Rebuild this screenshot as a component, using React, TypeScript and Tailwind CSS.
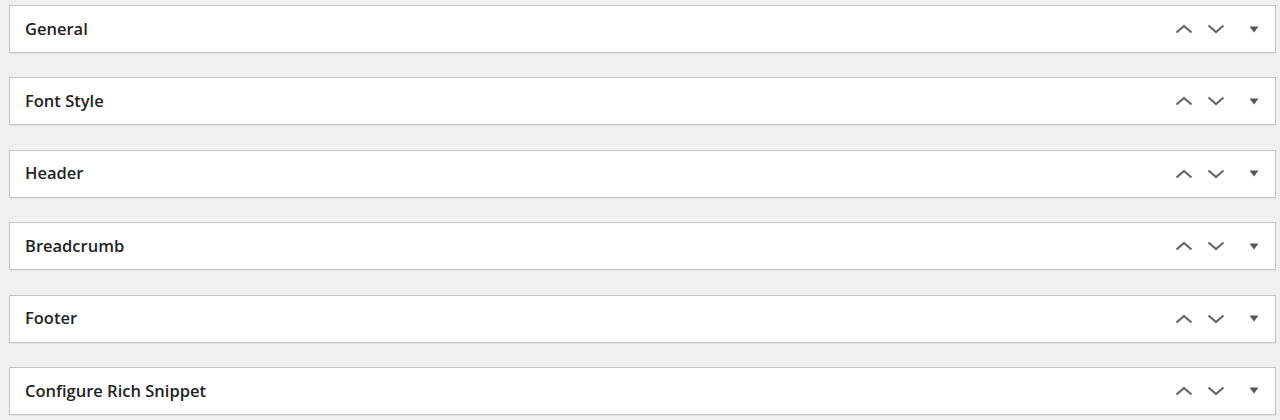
import React from "react";

const boxes = ["General", "Font Style", "Header", "Breadcrumb", "Footer", "Configure Rich Snippet"];

function ChevronUp() {
  return (
    <svg width="18" height="10" viewBox="0 0 18 10" fill="none">
      <path d="M1.5 8.5 L9 2 L16.5 8.5" stroke="#646970" strokeWidth="2.3" />
    </svg>
  );
}

function ChevronDown() {
  return (
    <svg width="18" height="10" viewBox="0 0 18 10" fill="none">
      <path d="M1.5 1.5 L9 8 L16.5 1.5" stroke="#646970" strokeWidth="2.3" />
    </svg>
  );
}

function Caret() {
  return (
    <svg width="10" height="7" viewBox="0 0 10 7">
      <path d="M0.5 0.5 L9.5 0.5 L5 6.5 Z" fill="#50575e" />
    </svg>
  );
}

export default function App() {
  return (
    <div className="min-h-[420px] bg-[#f0f0f1] pl-[9px] pr-[4px] pt-[5px] font-['Open_Sans',sans-serif]">
      <div className="flex flex-col gap-[24.4px]">
        {boxes.map((b) => (
          <div
            key={b}
            className="h-[48px] bg-white border border-[#c3c4c7] shadow-[0_1px_1px_rgba(0,0,0,0.04)] flex items-center justify-between"
          >
            <h2 className="pl-[15px] text-[16.5px] font-semibold text-[#1d2327]">{b}</h2>
            <div className="flex items-center h-full">
              <button type="button" className="w-[32px] h-full flex items-center justify-center">
                <ChevronUp />
              </button>
              <button type="button" className="w-[32px] h-full flex items-center justify-center">
                <ChevronDown />
              </button>
              <button type="button" className="w-[43px] h-full flex items-center justify-center">
                <Caret />
              </button>
            </div>
          </div>
        ))}
      </div>
    </div>
  );
}
